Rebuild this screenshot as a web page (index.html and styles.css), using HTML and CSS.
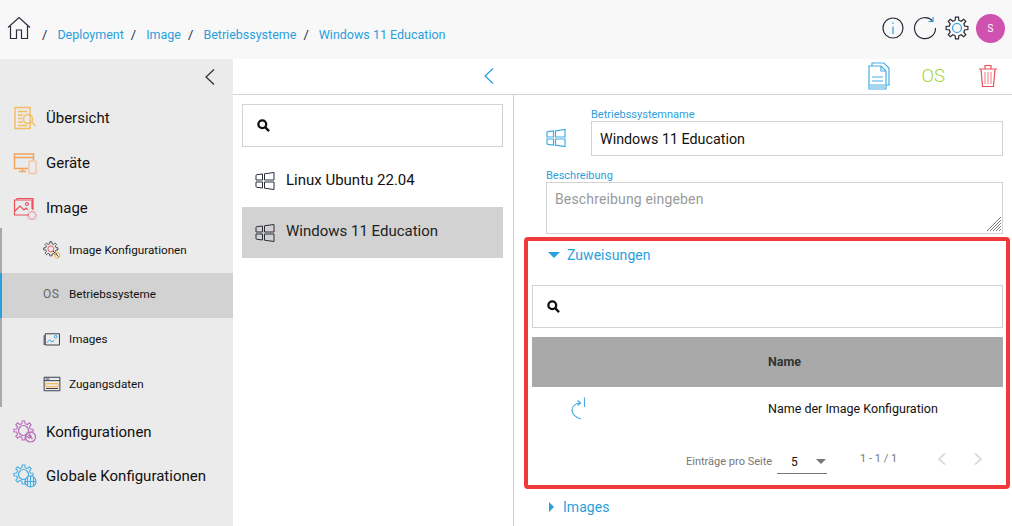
FILE: index.html
```html
<!DOCTYPE html>
<html lang="de">
<head>
<meta charset="utf-8">
<title>Windows 11 Education</title>
<link rel="stylesheet" href="styles.css">
</head>
<body>
<svg class="defs" width="0" height="0" aria-hidden="true">
  <symbol id="gear" viewBox="0 0 24 24"><path d="M19.8 10.200 22.900 10.470 22.900 13.530 19.800 13.800 18.790 16.240 20.790 18.630 18.630 20.790 16.240 18.790 13.800 19.800 13.530 22.900 10.470 22.900 10.200 19.800 7.760 18.790 5.370 20.790 3.210 18.630 5.210 16.240 4.200 13.800 1.100 13.530 1.100 10.470 4.200 10.200 5.210 7.760 3.210 5.370 5.370 3.210 7.760 5.210 10.200 4.200 10.470 1.100 13.530 1.100 13.800 4.200 16.240 5.210 18.630 3.210 20.790 5.370 18.790 7.760Z"/></symbol>
  <symbol id="win" viewBox="0 0 20 20"><path d="M1 4.500Q1 3.800 1.800 3.700L7.500 3V9H1zM1 11H7.500V17L1.800 16.300Q1 16.200 1 15.500zM9.500 2.800 19 1.500V9H9.500zM9.500 11H19V18.500L9.500 17.200z"/></symbol>
</svg>
<header class="topbar">
  <svg class="home" viewBox="0 0 24 24" width="24" height="24"><path d="M1 11.500 12 1.500l11 10" class="s-dark"/><path d="M3.500 10v12.500h6V14h5v8.500h6V10" class="s-dark"/></svg>
  <nav class="crumbs">
    <span class="sep first">/</span><a>Deployment</a><span class="sep">/</span><a>Image</a><span class="sep">/</span><a>Betriebssysteme</a><span class="sep">/</span><a>Windows 11 Education</a>
  </nav>
  <div class="top-actions">
    <svg viewBox="0 0 24 24" width="24" height="24"><circle cx="12" cy="12" r="10" class="s-dark"/><path d="M12 10.500V18M12 6.500v1.600" class="s-blue"/></svg>
    <svg viewBox="0 0 24 24" width="24" height="24"><path d="M19.500 4.800A10.500 10.500 0 1 0 22.500 12" class="s-dark"/><path d="M15.500 5.500h4.500V1" class="s-blue"/></svg>
    <svg viewBox="0 0 24 24" width="24" height="24"><use href="#gear" class="s-dark"/><circle cx="12" cy="12" r="4.500" class="s-blue"/></svg>
    <div class="avatar">S</div>
  </div>
</header>
<div class="body">
  <aside class="sidebar">
    <div class="side-toggle"><svg viewBox="0 0 12 18" width="12" height="18"><path d="M10 1.500 2 9l8 7.500" class="s-dark"/></svg></div>
    <a class="nav-item"><svg viewBox="0 0 24 24" width="24" height="24"><path d="M2 1.500h15v21H2zM5 5.500h9M5 9h5M5 12.500h4M5 16h5M5 19.500h9" class="s-amber"/><circle cx="15" cy="13" r="4.500" class="s-amber"/><path d="m18.500 16 4 4" class="s-amber"/></svg><span>Übersicht</span></a>
    <a class="nav-item"><svg viewBox="0 0 24 24" width="24" height="24"><path d="M15 17.500H1.500V3h19v6M1.500 6.500h19M6 20.500h7M9.500 17.500v3" class="s-peach"/><rect x="16" y="10" width="7" height="12.500" rx="1" class="s-peach2"/></svg><span>Geräte</span></a>
    <a class="nav-item"><svg viewBox="0 0 24 24" width="24" height="24"><path d="M4 4V2.500h16V14M16 19H1.500V4H19v9M2 15l5-5 4 4 2-2 2 2" class="s-red"/><circle cx="14" cy="8" r="1.500" class="s-red"/><use href="#gear" x="14" y="14.500" width="10" height="10" class="s-red"/></svg><span>Image</span></a>
    <div class="subnav">
      <a class="sub-item"><svg viewBox="0 0 24 24" width="18" height="18"><use href="#gear" width="21" height="21" class="s-dark"/><circle cx="10.500" cy="10.500" r="4" class="s-red"/><path d="m13 13 8 8" class="s-dark"/><circle cx="19" cy="19" r="3.500" class="s-amber"/></svg><span>Image Konfigurationen</span></a>
      <a class="sub-item active"><span class="os">OS</span><span>Betriebssysteme</span></a>
      <a class="sub-item"><svg viewBox="0 0 24 24" width="18" height="18"><path d="M3 5h19v15H3zM1.500 20V7" class="s-dark"/><path d="m5 17 4-4 3 3 3-2" class="s-blue"/><circle cx="17" cy="9" r="1.800" class="s-blue"/></svg><span>Images</span></a>
      <a class="sub-item"><svg viewBox="0 0 24 24" width="18" height="18"><path d="M1.500 3h21v18h-21zM1.500 7.500h21M3.500 5.300h5" class="s-dark"/><path d="M4 11.500h16v4H4z" class="s-amber"/><path d="M4 18h16" class="s-dark"/></svg><span>Zugangsdaten</span></a>
    </div>
    <a class="nav-item k1"><svg viewBox="0 0 24 24" width="24" height="24"><use href="#gear" width="21" height="21" class="s-purple"/><circle cx="10.500" cy="10.500" r="5" class="s-purple"/><circle cx="17.500" cy="17" r="5" class="s-purple"/><path d="m15.500 15 4 4" class="s-purple"/></svg><span>Konfigurationen</span></a>
    <a class="nav-item k2"><svg viewBox="0 0 24 24" width="24" height="24"><use href="#gear" width="21" height="21" class="s-sky"/><circle cx="10.500" cy="10.500" r="5" class="s-sky"/><circle cx="17.500" cy="17.500" r="5.500" class="s-sky f-white"/><path d="M12 17.500h11M17.500 12v11M14.500 13.500v8M20.500 13.500v8" class="s-sky"/></svg><span>Globale Konfigurationen</span></a>
  </aside>
  <main class="content">
    <div class="toolbar">
      <div class="tool-left"><svg viewBox="0 0 12 18" width="12" height="18"><path d="M10 1.500 2 9l8 7.500" class="s-blue"/></svg></div>
      <div class="tool-right">
        <svg viewBox="0 0 24 28" width="24" height="28"><path d="M5 4V1h12l5 5v17h-3" class="s-sky"/><path d="M2 4h12l5 5v18H2z" class="s-sky"/><path d="M14 4v5h5" class="s-sky"/><path d="M5 15h11M5 19h11" class="s-sky"/><path d="M3 22h15v4H3z" class="f-sky"/></svg>
        <span class="os-btn">OS</span>
        <svg viewBox="0 0 20 24" width="20" height="24"><path d="M1 5h18M7 5V1.500h6V5M3 5l1.500 17.500h11L17 5" class="s-red"/><path d="M7 8v12M10 8v12M13 8v12" class="s-pink"/></svg>
      </div>
    </div>
    <div class="panes">
      <section class="list-pane">
        <div class="searchbox"><svg class="glass" viewBox="0 0 14 14" width="13" height="13"><circle cx="5.700" cy="5.700" r="4.200"/><path d="m9 9 4 4"/></svg></div>
        <ul class="os-list">
          <li class="os-row first-row"><svg viewBox="0 0 20 20" width="20" height="20"><use href="#win" class="s-dark"/></svg><span>Linux Ubuntu 22.04</span></li>
          <li class="os-row selected"><svg viewBox="0 0 20 20" width="20" height="20"><use href="#win" class="s-dark"/></svg><span>Windows 11 Education</span></li>
        </ul>
      </section>
      <section class="detail-pane">
        <div class="name-row">
          <svg viewBox="0 0 20 20" width="20" height="20"><use href="#win" class="s-sky"/></svg>
          <div class="field grow">
            <label class="lbl">Betriebssystemname</label>
            <div class="input">Windows 11 Education</div>
          </div>
        </div>
        <div class="field desc">
          <label class="lbl">Beschreibung</label>
          <div class="textarea">Beschreibung eingeben
            <svg class="grip" viewBox="0 0 14 14" width="14" height="14"><path d="M14 0 0 14M14 3 3 14M14 6 6 14M14 9l-5 5M14 12l-2 2"/></svg>
          </div>
        </div>
        <div class="assign">
          <div class="acc-head open"><i class="tri-down"></i><span>Zuweisungen</span></div>
          <div class="searchbox wide"><svg class="glass" viewBox="0 0 14 14" width="13" height="13"><circle cx="5.700" cy="5.700" r="4.200"/><path d="m9 9 4 4"/></svg></div>
          <div class="thead"><b>Name</b></div>
          <div class="trow">
            <svg viewBox="0 0 18 24" width="18" height="24"><path d="M12 23C7 22 3 18 3 14.500 3 10 7 7.500 11 7M8.500 4.500 11.500 7 8.500 9.500M15.500 1.500V11" class="s-sky"/></svg>
            <span>Name der Image Konfiguration</span>
          </div>
          <div class="pager">
            <span class="per">Einträge pro Seite</span>
            <div class="select"><span>5</span><i class="tri-gray"></i></div>
            <span class="range">1 - 1 / 1</span>
            <svg viewBox="0 0 10 14" width="10" height="14"><path d="M8 1.500 2 7l6 5.500" class="s-light"/></svg>
            <svg viewBox="0 0 10 14" width="10" height="14"><path d="M2 1.500 8 7l-6 5.500" class="s-light"/></svg>
          </div>
        </div>
        <div class="acc-head closed"><i class="tri-right"></i><span>Images</span></div>
      </section>
    </div>
  </main>
</div>
</body>
</html>
```
FILE: styles.css
```css
* { box-sizing: border-box; }
html, body { margin: 0; height: 526px; overflow: hidden; }
body { font-family: Roboto, "Liberation Sans", sans-serif; color: #111; background: #fff; display: flex; flex-direction: column; }
svg { fill: none; stroke-width: 1.2; flex: none; display: block; }
.defs { position: absolute; }
ul { list-style: none; margin: 0; padding: 0; }

.s-dark { stroke: #2a2c3a; }
.s-blue { stroke: #2a9fdc; }
.s-sky { stroke: #45ace3; }
.f-sky { fill: #a6d5ef; }
.f-white { fill: #ebebeb; }
.s-amber { stroke: #f4bd5e; stroke-width: 1.400; }
.s-peach { stroke: #f2a35c; stroke-width: 1.400; }
.s-peach2 { stroke: #f8c3a0; stroke-width: 1.400; }
.s-red { stroke: #e9505a; }
.s-pink { stroke: #f0909a; }
.s-purple { stroke: #b56ab8; }
.s-light { stroke: #dcdcdc; stroke-width: 2; }
.os-row svg { stroke-width: 1; }

.topbar { height: 59px; background: #f8f8f8; display: flex; align-items: center; padding: 0 7px 0 7px; flex: none; }
.home { margin-top: -3px; }
.crumbs { display: flex; align-items: center; font-size: 12.500px; color: #1f2a44; margin-left: 11px; margin-top: 10px; }
.crumbs a { color: #2a9fdc; }
.sep { font-size: 13px; color: #1f2a44; }
.sep.first { margin: 0 10px 0 0; }
.crumbs a + .sep { margin: 0 10px 0 7px; }
.top-actions { margin-left: auto; display: flex; align-items: center; gap: 8px; margin-top: -3px; }
.avatar { width: 29px; height: 29px; border-radius: 50%; background: #cf52b1; color: #fff; font-size: 10px; display: flex; align-items: center; justify-content: center; margin-left: -1px; }

.body { flex: 1; display: flex; min-height: 0; }
.sidebar { width: 233px; flex: none; background: #ebebeb; }
.side-toggle { height: 36px; display: flex; justify-content: flex-end; align-items: center; padding-right: 17px; }
.nav-item { height: 45px; display: flex; align-items: center; gap: 9px; padding: 0 0 0 13px; font-size: 15px; color: #111; }
.subnav { border-left: 2px solid #a9a9a9; margin-top: -2px; }
.sub-item { height: 44.750px; display: flex; align-items: center; gap: 8px; padding: 0 0 1px 41px; font-size: 11.700px; color: #111; margin-left: -2px; border-left: 2px solid transparent; }
.sub-item.active { background: #d2d2d2; border-left-color: #2a9fdc; padding-bottom: 3px; }
.os { width: 18px; font-size: 12px; color: #666; letter-spacing: .4px; }
.k1 { margin-top: 3px; height: 44px; }
.k2 { height: 44px; }

.content { flex: 1; display: flex; flex-direction: column; min-width: 0; }
.toolbar { height: 36px; flex: none; display: flex; align-items: center; border-bottom: 1px solid #d2d2d2; }
.tool-left { width: 512px; display: flex; justify-content: center; margin-top: -2px; }
.tool-right { margin-left: auto; display: flex; align-items: center; margin-right: 14px; margin-top: -1px; }
.os-btn { color: #a5d33a; font-size: 18.500px; font-weight: 300; margin: 0 33px 0 31px; }

.panes { flex: 1; display: flex; min-height: 0; }
.list-pane { width: 281px; flex: none; border-right: 1px solid #d2d2d2; padding: 9px 10px 0 9px; }
.searchbox { height: 43px; border: 1px solid #d2d2d2; display: flex; align-items: center; padding-left: 14px; background: #fff; }
.glass { stroke: #111; stroke-width: 2.500; }
.os-list { margin-top: 8px; }
.os-row { height: 51px; display: flex; align-items: center; gap: 11px; padding-left: 13px; font-size: 15px; margin-bottom: 1px; color: #111; }
.os-row.first-row span { margin-top: -2px; }
.os-row.selected { background: #d2d2d2; color: #222; }
.os-row.selected span { margin-top: -3px; }

.detail-pane { flex: 1; min-width: 0; padding: 0 9px 0 11px; position: relative; }
.name-row { display: flex; align-items: flex-end; padding: 13px 0 0 21px; gap: 25px; }
.name-row > svg { margin-bottom: 8px; }
.grow { flex: 1; min-width: 0; }
.lbl { display: block; font-size: 11px; color: #2a9fdc; line-height: 13px; }
.input { height: 35px; border: 1px solid #d2d2d2; font-size: 14.300px; padding: 0 8px; display: flex; align-items: center; }
.desc { margin: 13px 0 0 21px; }
.textarea { height: 52px; border: 1px solid #d2d2d2; font-size: 14px; color: #9a9a9a; padding: 8px; position: relative; letter-spacing: .15px; line-height: 17px; }
.grip { position: absolute; right: 1px; bottom: 2px; stroke: #777; stroke-width: 1; }

.assign { margin: 3px -7px 0 -1px; padding: 7px 0 0 1px; height: 252px; position: relative; }
.assign::after { content: ""; position: absolute; inset: 0; border: 4px solid #f03a3a; border-radius: 4px; pointer-events: none; }
.acc-head { display: flex; align-items: center; color: #2a9fdc; font-size: 14px; letter-spacing: .05px; }
.acc-head.open { padding-left: 23px; gap: 7px; height: 21px; }
.tri-down { width: 0; height: 0; border-left: 6px solid transparent; border-right: 6px solid transparent; border-top: 6px solid #2a9fdc; }
.tri-right { width: 0; height: 0; border-top: 5px solid transparent; border-bottom: 5px solid transparent; border-left: 5px solid #2a9fdc; }
.searchbox.wide { margin: 20px 7px 0 7px; }
.thead { height: 50px; background: #a9a9a9; margin: 9px 7px 0 7px; display: flex; align-items: center; padding: 0 0 2px 236px; font-size: 12.500px; color: #333; }
.thead b { font-weight: 700; }
.trow { height: 44px; margin: 0 7px; display: flex; align-items: center; padding: 0 0 2px 37px; font-size: 12.500px; color: #111; }
.trow span { margin-left: 181px; }
.pager { display: flex; align-items: center; height: 30px; margin-top: 14px; padding-left: 161px; font-size: 11px; color: #777; }
.per { margin-top: 2px; }
.select { width: 50px; height: 24px; border-bottom: 1px solid #777; margin: 4px 0 0 5px; display: flex; align-items: center; justify-content: space-between; padding: 0 0 0 14px; font-size: 12px; color: #111; }
.tri-gray { width: 0; height: 0; border-left: 5px solid transparent; border-right: 5px solid transparent; border-top: 5px solid #777; margin-right: 1px; }
.range { margin-left: 33px; margin-top: -3px; width: 77px; }
.pager svg { margin-top: -3px; }
.pager svg + svg { margin-left: 26px; }
.acc-head.closed { padding: 10px 0 0 24px; gap: 9px; }
```
